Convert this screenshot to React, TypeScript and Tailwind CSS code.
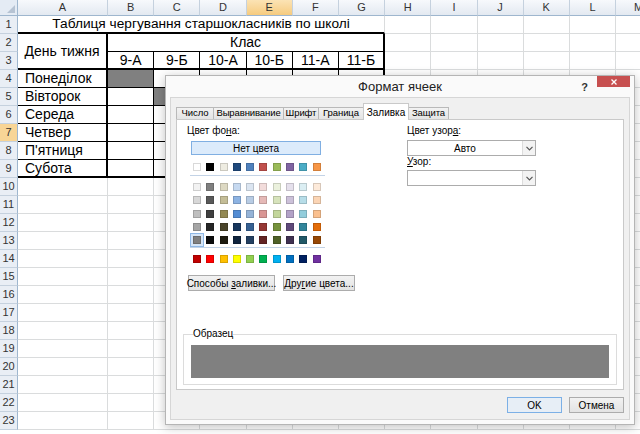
import React from "react";

const COLS = ["A", "B", "C", "D", "E", "F", "G", "H", "I", "J", "K", "L", "M"];
const DAYS = ["Понеділок", "Вівторок", "Середа", "Четвер", "П'ятниця", "Субота"];
const CLASSES = ["9-А", "9-Б", "10-А", "10-Б", "11-А", "11-Б"];

// right / bottom borders: g = gridline, k = thin black, K = thick black
const R = {
  g: "border-r border-r-[#dadcdd]",
  k: "border-r border-r-black",
  K: "border-r-2 border-r-black",
};
const B = {
  g: "border-b border-b-[#dadcdd]",
  k: "border-b border-b-black",
  K: "border-b-2 border-b-black",
};

const THEME = ["#FFFFFF", "#000000", "#EEECE1", "#1F497D", "#4F81BD", "#C0504D", "#9BBB59", "#8064A2", "#4BACC6", "#F79646"];
const TINTS = [
  ["#F2F2F2", "#7F7F7F", "#DDD9C3", "#C6D9F0", "#DBE5F1", "#F2DCDB", "#EBF1DD", "#E5E0EC", "#DBEEF3", "#FDEADA"],
  ["#D8D8D8", "#595959", "#C4BD97", "#8DB3E2", "#B8CCE4", "#E5B9B7", "#D7E3BC", "#CCC1D9", "#B7DDE8", "#FBD5B5"],
  ["#BFBFBF", "#3F3F3F", "#938953", "#548DD4", "#95B3D7", "#D99694", "#C3D69B", "#B2A2C7", "#92CDDC", "#FAC08F"],
  ["#A5A5A5", "#262626", "#494429", "#17365D", "#366092", "#953734", "#76923C", "#5F497A", "#31859B", "#E36C09"],
  ["#7F7F7F", "#0C0C0C", "#1D1B10", "#0F243E", "#244061", "#632423", "#4F6128", "#3F3151", "#205867", "#974806"],
];
const STANDARD = ["#C00000", "#FF0000", "#FFC000", "#FFFF00", "#92D050", "#00B050", "#00B0F0", "#0070C0", "#002060", "#7030A0"];

const TABS = [
  { label: "Число", w: "w-[38px]" },
  { label: "Выравнивание", w: "w-[71px]" },
  { label: "Шрифт", w: "w-[36px]" },
  { label: "Граница", w: "w-[46px]" },
  { label: "Заливка", w: "w-[46px]", active: true },
  { label: "Защита", w: "w-[41px]" },
];

function RowHead({ n }: { n: number }) {
  const hl = n === 7;
  return (
    <div
      className={`flex items-center justify-center border-r border-b border-r-[#9eb6ce] border-b-[#c5d1de] text-[11px] text-[#333] ${
        hl ? "bg-[#f8d596]" : "bg-[#e9eef5]"
      }`}
    >
      {n}
    </div>
  );
}

function Empty({ n }: { n: number }) {
  return (
    <>
      {Array.from({ length: n }, (_, i) => (
        <div key={i} className={`${R.g} ${B.g}`} />
      ))}
    </>
  );
}

function Sheet() {
  return (
    <div className="grid grid-cols-[18px_90px_repeat(12,46.2px)] grid-rows-[16px_repeat(23,18px)] text-[14px] text-black">
      {/* header row */}
      <div className="flex items-end justify-end border-r border-b border-r-[#9eb6ce] border-b-[#9eb6ce] bg-[#e4ebf4] p-[2px]">
        <svg width="8" height="8" viewBox="0 0 8 8">
          <polygon points="8,0 8,8 0,8" fill="#b6c3d3" />
        </svg>
      </div>
      {COLS.map((c) => (
        <div
          key={c}
          className={`flex items-center justify-center overflow-hidden border-r border-b border-r-[#c5d1de] border-b-[#9eb6ce] text-[11px] text-[#333] bg-linear-to-b ${
            c === "E" ? "from-[#fbe3b4] to-[#f6cb7e]" : "from-[#f7f9fc] to-[#e3e9f1]"
          }`}
        >
          {c}
        </div>
      ))}

      {/* row 1 */}
      <RowHead n={1} />
      <div className={`col-span-7 flex items-center justify-center text-[13.7px] ${R.g} ${B.K}`}>
        Таблиця чергування старшокласників по школі
      </div>
      <Empty n={6} />

      {/* row 2 */}
      <RowHead n={2} />
      <div className={`row-span-2 flex items-center justify-center ${R.K} ${B.K}`}>День тижня</div>
      <div className={`col-span-6 flex items-center justify-center ${R.K} ${B.k}`}>Клас</div>
      <Empty n={6} />

      {/* row 3 */}
      <RowHead n={3} />
      {CLASSES.map((c, i) => (
        <div key={c} className={`flex items-center justify-center ${i === 5 ? R.K : R.k} ${B.K}`}>
          {c}
        </div>
      ))}
      <Empty n={6} />

      {/* rows 4-9 */}
      {DAYS.map((d, i) => (
        <React.Fragment key={d}>
          <RowHead n={4 + i} />
          <div className={`flex items-center pl-[7px] ${R.K} ${i === 5 ? B.K : B.k}`}>{d}</div>
          {CLASSES.map((c, j) => (
            <div
              key={c}
              className={`${j === 5 ? R.K : R.k} ${i === 5 ? B.K : B.k} ${
                (i === 0 && j === 0) || (i === 1 && j === 1) ? "bg-[#808080]" : ""
              }`}
            />
          ))}
          <Empty n={6} />
        </React.Fragment>
      ))}

      {/* rows 10-23 */}
      {Array.from({ length: 14 }, (_, i) => (
        <React.Fragment key={i}>
          <RowHead n={10 + i} />
          <Empty n={13} />
        </React.Fragment>
      ))}
    </div>
  );
}

function Swatch({ c, sel }: { c: string; sel?: boolean }) {
  const box = <div className="h-[8px] w-[8px] border border-black/15" style={{ background: c }} />;
  if (!sel) return box;
  return <div className="-m-[3px] border border-[#8fb8e6] bg-[#d5e5f7] p-[2px]">{box}</div>;
}

function Combo({ value }: { value?: string }) {
  return (
    <div className="flex h-[16px] w-[129px] border border-[#acacac] bg-white">
      <div className="flex flex-1 items-center justify-center">{value}</div>
      <div className="flex w-[13px] items-center justify-center border-l border-[#dcdcdc] bg-[#f3f3f3]">
        <svg width="7" height="5" viewBox="0 0 7 5">
          <path d="M0.5 0.8 L3.5 3.8 L6.5 0.8" fill="none" stroke="#555" strokeWidth="1.2" />
        </svg>
      </div>
    </div>
  );
}

function Btn({ children, w, primary }: { children: React.ReactNode; w: string; primary?: boolean }) {
  return (
    <div
      className={`flex h-[16px] items-center justify-center whitespace-nowrap border ${w} ${
        primary ? "border-[#7cb0e6] bg-[#e7eef6]" : "border-[#acacac] bg-linear-to-b from-[#f2f2f2] to-[#e3e3e3]"
      }`}
    >
      <span>{children}</span>
    </div>
  );
}

function FormatDialog() {
  return (
    <div className="absolute left-[165px] top-[75px] flex h-[350px] w-[470px] flex-col border border-[#b5b5b5] bg-[#fafafa] text-[10px] text-black shadow-[0_2px_10px_rgba(0,0,0,0.25)]">
      {/* title bar */}
      <div className="grid h-[21px] grid-cols-[1fr_auto_1fr]">
        <div />
        <div className="self-center pt-[1px] text-[13px] text-[#222]">Формат ячеек</div>
        <div className="flex items-start justify-end gap-[9px]">
          <span className="mt-[3px] text-[11px] font-bold text-[#333]">?</span>
          <div className="mr-[4px] flex h-[11px] w-[33px] items-center justify-center bg-[#c75050]">
            <svg width="6" height="6" viewBox="0 0 6 6">
              <path d="M0.5 0.5 L5.5 5.5 M5.5 0.5 L0.5 5.5" stroke="#fff" strokeWidth="1.3" />
            </svg>
          </div>
        </div>
      </div>

      {/* client area */}
      <div className="mx-[4px] mb-[4px] flex flex-1 flex-col border border-[#d6d6d6] bg-[#f0f0f0]">
        {/* tabs */}
        <div className="mt-[5px] flex h-[16px] items-end pl-[5px]">
          {TABS.map((t) =>
            t.active ? (
              <div
                key={t.label}
                className={`relative z-10 -mb-px -ml-px flex h-[17px] items-center justify-center whitespace-nowrap border border-b-0 border-[#c9c9c9] bg-white ${t.w}`}
              >
                {t.label}
              </div>
            ) : (
              <div
                key={t.label}
                className={`-ml-px flex h-[12px] items-center justify-center whitespace-nowrap border border-b-0 border-[#b9b9b9] bg-linear-to-b from-[#f2f2f2] to-[#e4e4e4] text-[9.5px] tracking-[-0.1px] first:ml-0 ${t.w}`}
              >
                {t.label}
              </div>
            )
          )}
        </div>

        {/* panel */}
        <div className="mx-[5px] flex h-[271px] flex-col border border-[#c9c9c9] bg-white">
          <div className="flex pl-[10px] pt-[5px]">
            {/* left column */}
            <div className="w-[220px]">
              <div className="h-[12px] leading-[12px]">
                Цвет фо<u>н</u>а:
              </div>
              <div className="ml-[4px] mt-[4px] flex h-[14px] w-[130px] items-center justify-center border border-[#80afe2] bg-[#dcebfb]">
                Нет цвета
              </div>
              <div className="ml-[6px] mt-[8px] flex gap-x-[5.3px]">
                {THEME.map((c, i) => (
                  <Swatch key={i} c={c} />
                ))}
              </div>
              <div className="ml-[3px] mt-[4px] h-px w-[135px] bg-[#c3d3e6]" />
              <div className="ml-[6px] mt-[7px] flex flex-col gap-y-[5.25px]">
                {TINTS.map((row, r) => (
                  <div key={r} className="flex gap-x-[5.3px]">
                    {row.map((c, i) => (
                      <Swatch key={i} c={c} sel={r === 4 && i === 0} />
                    ))}
                  </div>
                ))}
              </div>
              <div className="ml-[3px] mt-[3px] h-px w-[135px] bg-[#c3d3e6]" />
              <div className="ml-[6px] mt-[7px] flex gap-x-[5.3px]">
                {STANDARD.map((c, i) => (
                  <Swatch key={i} c={c} />
                ))}
              </div>
              <div className="ml-[1px] mt-[12px] flex gap-[8px]">
                <Btn w="w-[87px]">
                  Способы <u>з</u>аливки...
                </Btn>
                <Btn w="w-[72px]">
                  Дру<u>г</u>ие цвета...
                </Btn>
              </div>
            </div>

            {/* right column */}
            <div className="flex flex-col">
              <div className="h-[12px] leading-[12px]">
                Цвет узор<u>а</u>:
              </div>
              <div className="mt-[3px]">
                <Combo value="Авто" />
              </div>
              <div className="h-[12px] leading-[12px]">
                <u>У</u>зор:
              </div>
              <div className="mt-[2px]">
                <Combo />
              </div>
            </div>
          </div>

          <fieldset className="mx-[6px] mb-[4px] mt-auto border border-[#dcdcdc] px-[7px] pb-[6px]">
            <legend className="ml-[2px] h-[12px] leading-[12px]">Образец</legend>
            <div className="mt-[5px] h-[33px] bg-[#808080]" />
          </fieldset>
        </div>

        {/* footer buttons */}
        <div className="mt-[7px] flex justify-end gap-[7px] pr-[5px]">
          <Btn w="w-[55px]" primary>
            OK
          </Btn>
          <Btn w="w-[55px]">Отмена</Btn>
        </div>
      </div>
    </div>
  );
}

export default function App() {
  return (
    <div className="relative h-[434px] w-[640px] overflow-hidden bg-white font-['Liberation_Sans',Arial,sans-serif]">
      <Sheet />
      <FormatDialog />
    </div>
  );
}
